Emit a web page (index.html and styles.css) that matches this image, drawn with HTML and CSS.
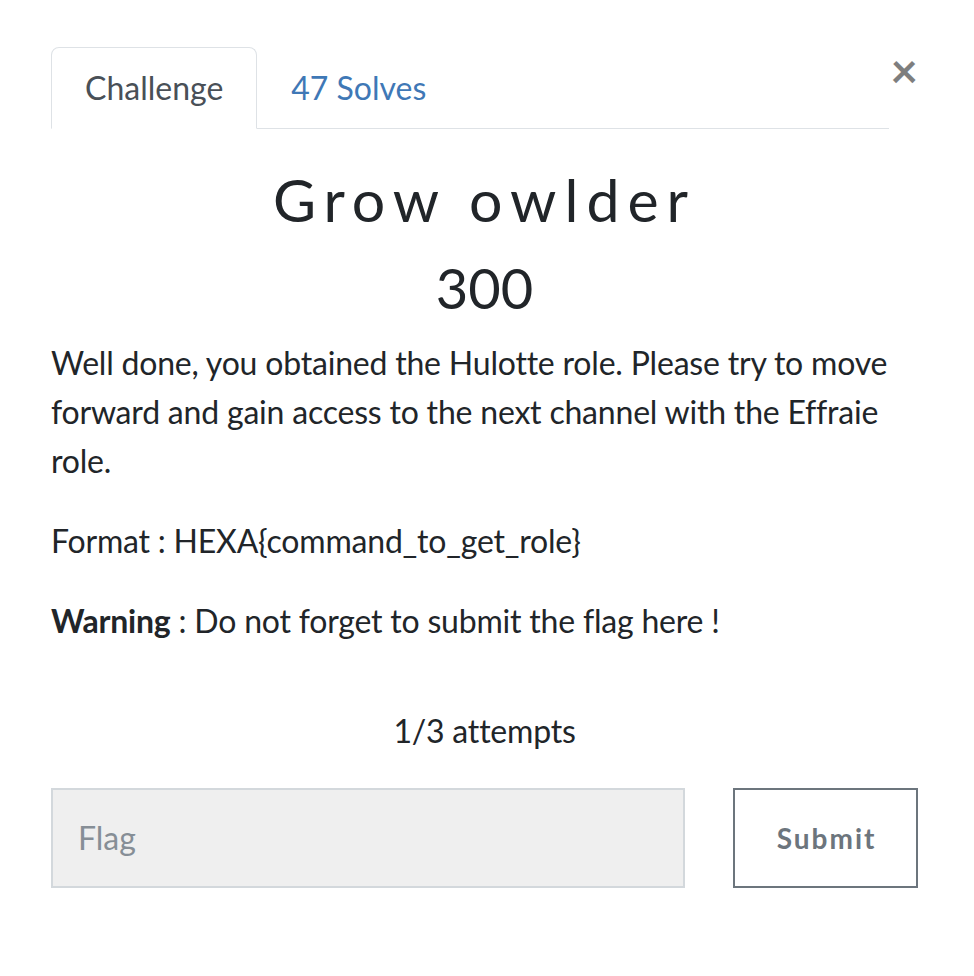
FILE: index.html
```html
<!DOCTYPE html>
<html>
<head>
<meta charset="utf-8">
<link rel="stylesheet" href="styles.css">
</head>
<body>
<div class="modal">
  <div class="header">
    <ul class="tabs">
      <li class="tab active">Challenge</li>
      <li class="tab link">47 Solves</li>
    </ul>
    <button class="close" type="button">×</button>
  </div>
  <div class="content">
    <h2 class="name">Grow owlder</h2>
    <h3 class="value">300</h3>
    <div class="desc">
      <p>Well done, you obtained the Hulotte role. Please try to move forward and gain access to the next channel with the Effraie role.</p>
      <p>Format : HEXA{command_to_get_role}</p>
      <p><strong>Warning</strong> : Do not forget to submit the flag here !</p>
    </div>
    <p class="attempts">1/3 attempts</p>
    <div class="submit-row">
      <input class="flag" type="text" placeholder="Flag">
      <button class="submit" type="button">Submit</button>
    </div>
  </div>
</div>
</body>
</html>
```

FILE: styles.css
```css
* { box-sizing: border-box; }
html, body { margin: 0; padding: 0; background: #fff; }
body {
  font-family: Lato, "Open Sans", sans-serif;
  font-size: 32px;
  line-height: 1.5;
  color: #212529;
}
.modal {
  margin-left: 51px;
  width: 867px;
  padding-top: 47px;
}
.header {
  display: flex;
  align-items: flex-start;
}
.tabs {
  flex: 1;
  display: flex;
  list-style: none;
  margin: 0;
  padding: 0;
  border-bottom: 1px solid #dee2e6;
}
.tab {
  padding: 16px 33px;
  border: 1px solid transparent;
  border-top-left-radius: 8px;
  border-top-right-radius: 8px;
  margin-bottom: -1px;
}
.tab.active {
  color: #495057;
  border-color: #dee2e6 #dee2e6 #fff;
  background: #fff;
}
.tab.link { color: #3f78b6; }
.close {
  width: 29px;
  padding: 0;
  margin: 0;
  border: 0;
  background: transparent;
  font-family: Lato, sans-serif;
  font-size: 48px;
  font-weight: 700;
  line-height: 1;
  color: #000;
  opacity: .5;
  margin-top: -1px;
  text-align: right;
}
.content { text-align: left; }
.name {
  margin: 36px 0 0;
  text-align: center;
  font-weight: 400;
  font-size: 59px;
  line-height: 1.2;
  letter-spacing: 8px;
  text-indent: 0;
}
.value {
  margin: 18px 0 0;
  text-align: center;
  font-weight: 400;
  font-size: 56px;
  line-height: 1.2;
}
.desc {
  margin-top: 17px;
  line-height: 49px;
  letter-spacing: -0.2px;
}
.desc p { margin: 0 0 31px; }
.desc strong { font-weight: 700; }
.attempts {
  text-align: center;
  margin: 62px 0 0;
  letter-spacing: -0.2px;
}
.submit-row {
  display: flex;
  gap: 48px;
  margin-top: 33px;
}
.flag {
  width: 635px;
  height: 100px;
  background: #efefef;
  border: 2px solid #d3d8dc;
  padding: 0 25px;
  font-family: Lato, sans-serif;
  font-size: 32px;
  color: #495057;
  outline: none;
}
.flag::placeholder { color: #868e96; }
.submit {
  width: 185px;
  height: 100px;
  background: #fff;
  border: 2px solid #6c757d;
  font-family: Lato, sans-serif;
  font-size: 28px;
  font-weight: 700;
  letter-spacing: 2px;
  text-indent: 2px;
  color: #6c757d;
}
```
